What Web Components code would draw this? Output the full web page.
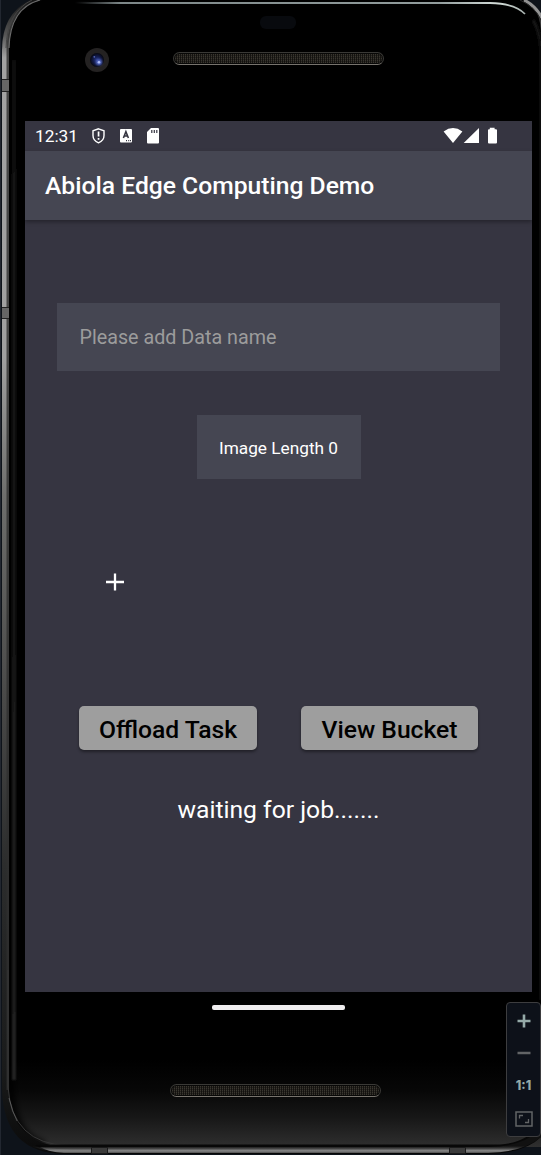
<!DOCTYPE html>
<html lang="en"><head><meta charset="utf-8"><title>Abiola Edge Computing Demo</title>
<style>
html,body{margin:0;background:#0d1118;overflow:hidden}
body{width:541px;height:1155px;font-family:Roboto,sans-serif;color:#fff}
</style></head><body>
<phone-device>
  <status-bar></status-bar>
  <app-bar>Abiola Edge Computing Demo</app-bar>
  <app-body></app-body>
</phone-device>
<zoom-controls></zoom-controls>
<script>
const define=(name,html)=>customElements.define(name,class extends HTMLElement{
  constructor(){super();const t=document.createElement('template');t.innerHTML=html;
    this.attachShadow({mode:'open'}).append(t.content.cloneNode(true));}
});

define('speaker-grille',`<style>
:host{display:block;box-sizing:border-box;width:211px;height:13px;border:1px solid #3a3936;border-bottom-color:#77736d;border-radius:7px;background:#080807;padding:1px}
div{height:100%;border-radius:5px;background:repeating-linear-gradient(0deg,transparent 0 1px,#0d0c0a66 1px 2px),repeating-linear-gradient(90deg,#3a3730 0 1px,#171512 1px 2px)}
</style><div></div>`);

define('device-frame',`<style>:host{display:block}svg{display:block}</style>
<svg width="541" height="1155" viewBox="0 0 541 1155">
<defs>
<linearGradient id="side" x1="0" y1="0" x2="0" y2="1155" gradientUnits="userSpaceOnUse">
<stop offset="0" stop-color="#161616"/><stop offset=".03" stop-color="#555"/><stop offset=".05" stop-color="#a2a2a2"/><stop offset=".31" stop-color="#a0a0a0"/><stop offset=".43" stop-color="#6e6e6c"/><stop offset=".6" stop-color="#4a4a49"/><stop offset=".75" stop-color="#2c2d2d"/><stop offset=".93" stop-color="#191a1a"/><stop offset="1" stop-color="#0a0a0a"/></linearGradient>
<linearGradient id="base" x1="0" y1="1060" x2="0" y2="1148" gradientUnits="userSpaceOnUse"><stop offset="0" stop-color="#000"/><stop offset=".35" stop-color="#070707"/><stop offset=".65" stop-color="#171717"/><stop offset="1" stop-color="#303030"/></linearGradient>
<linearGradient id="bottom" x1="0" y1="1146" x2="0" y2="1154" gradientUnits="userSpaceOnUse"><stop offset="0" stop-color="#111"/><stop offset=".25" stop-color="#333"/><stop offset=".6" stop-color="#8a8a8a"/><stop offset="1" stop-color="#333"/></linearGradient>
<linearGradient id="fade" x1="30" x2="100" y1="0" y2="0" gradientUnits="userSpaceOnUse"><stop offset="0" stop-color="#777" stop-opacity="0"/><stop offset="1" stop-color="#777"/></linearGradient>
<linearGradient id="shine" x1="75" x2="530" y1="0" y2="0" gradientUnits="userSpaceOnUse"><stop offset="0" stop-color="#778083" stop-opacity="0"/><stop offset=".1" stop-color="#7d8788"/><stop offset=".8" stop-color="#929d9d"/><stop offset=".93" stop-color="#d3dcd8"/><stop offset="1" stop-color="#a0aaa7"/></linearGradient>
<linearGradient id="rim" x1="0" y1="0" x2="0" y2="1155" gradientUnits="userSpaceOnUse"><stop offset="0" stop-color="#080808"/><stop offset=".2" stop-color="#151515"/><stop offset=".8" stop-color="#1c1c1c"/><stop offset="1" stop-color="#262626"/></linearGradient>
<radialGradient id="lens"><stop stop-color="#263784"/><stop offset=".55" stop-color="#121a48"/><stop offset="1" stop-color="#070810"/></radialGradient>
<clipPath id="glass"><path d="M9 48Q9 6 42 0H527Q541 12 541 34V1147H70Q9 1147 9 1085Z"/></clipPath>
<filter id="soft" filterUnits="userSpaceOnUse" x="0" y="0" width="541" height="1155"><feGaussianBlur stdDeviation=".8"/></filter><filter id="softer" x="-50%" y="-50%" width="200%" height="200%"><feGaussianBlur stdDeviation="3"/></filter>
</defs>
<path fill="#0e131a" d="M0 0h541v1155H0z"/><path fill="#222730" d="M0 0h1v1155H0z"/>
<path fill="url(#side)" d="M30 0Q2 14 2 50V1090Q4 1153 64 1154H488Q524 1153 541 1137V18Q536 7 525 0Z"/>
<path fill="#303030" opacity=".8" d="M6.5 50q0-28 17-42L14 24Q9 32 9 50V1090H6.5Z"/>
<g clip-path="url(#glass)"><path fill="#000" d="M0 0h541v1155H0z"/><path fill="url(#base)" d="M0 1060h541v95H0z"/>
<path fill="none" stroke="#000" stroke-width="7" filter="url(#softer)" d="M10 1040V1085Q11 1136 44 1145"/>
<path fill="none" stroke="url(#rim)" stroke-width="4" filter="url(#soft)" d="M14 60V1080"/></g>
<path fill="none" stroke="#6b6b6b" stroke-width="1.2" d="M9 48Q10 8 40 0"/><path fill="none" stroke="#444" d="M6 48Q7 12 32 0"/>
<path fill="none" stroke="#363636" d="M8 970V1087Q12 1144 68 1145.5"/>
<path fill="none" stroke="#777" opacity=".6" d="M9 1098Q12 1112 17 1121"/>
<path fill="#080808" d="M62 1144.5H500Q526 1143 541 1124V1137Q525 1153 488 1154H64Q50 1153 35 1145Z"/>
<path fill="url(#bottom)" d="M65 1147H490Q520 1147 541 1130V1137Q523 1152 488 1153H64Q48 1152 40 1147Z"/>
<path fill="url(#fade)" d="M30 1146Q60 1151 100 1150V1152H70Q48 1152 30 1146Z"/>
<path fill="#3b3b3b" stroke="#1a1a1a" d="M91.5 1147.5h16v6h-16zM449.5 1147.5h16v6h-16z"/>
<path fill="#666" d="M2 79h7v12H2zM2 307h7v12H2z"/><path stroke="#222" d="M2 79.5h7M2 91.5h7M2 307.5h7M2 318.5h7"/>
<path fill="none" stroke="url(#shine)" stroke-width="1.8" d="M75 2.6L91 3H490Q515 3.5 525 14"/>
<path fill="none" stroke="#929292" stroke-width="3" d="M524 0Q536 6 542 18"/><path fill="none" stroke="#292929" d="M520 0Q535 7 541 20"/>
<path fill="none" stroke="#171717" stroke-width="3" filter="url(#soft)" d="M533 20Q540 32 541 48V1000"/>
<rect x="260" y="16" width="36" height="13" rx="6" fill="#080a0e"/>
<circle cx="97" cy="60" r="12" fill="#242222"/><circle cx="97" cy="60" r="7" fill="url(#lens)"/><circle cx="99" cy="62.3" r="3" fill="#596dca" filter="url(#soft)"/><circle cx="99" cy="62.3" r="1.3" fill="#aebcf5"/><circle cx="94.3" cy="56.8" r=".9" fill="#5266bc"/>
</svg>`);

define('phone-device',`<style>
:host{display:grid;width:541px;height:1155px}
device-frame,main{grid-area:1/1}
main{display:grid;grid-template-rows:52px 13px 56px 871px 13px 6px 73px 13px;align-content:start;position:relative}
.top{grid-row:2;margin-left:173px}.screen{grid-row:4;width:507px;margin-left:25px;background:#363541;display:grid;grid-template-rows:30px 69px 772px}
.home{grid-row:6;width:133px;height:5px;margin-left:212px;border-radius:2px;background:#efedef}
.low{grid-row:8;margin-left:170px}
</style><device-frame></device-frame><main><speaker-grille class="top"></speaker-grille><div class="screen"><slot></slot></div><div class="home"></div><speaker-grille class="low"></speaker-grille></main>`);

define('status-bar',`<style>
:host{display:flex;align-items:center;box-sizing:border-box;padding:0 34px 0 10px;background:#363541;color:#fff}
span{font-size:17.3px;line-height:30px;width:57px}
svg{display:block}.n{width:70px;height:30px}.s{margin-left:auto}
</style><span>12:31</span>
<svg class="n" width="70" height="30" viewBox="92 121 70 30"><path fill="none" stroke="#fff" stroke-width="1.4" d="M98.5 128.8l5.5 2v4.8q0 5.2-5.5 7.2-5.5-2-5.5-7.2v-4.8z"/><path fill="#fff" d="M97.7 131.6h1.7v5h-1.7zM97.7 138h1.7v1.8h-1.7zM121 129h10q1 0 1 1v11.5q0 1-1 1h-10q-1 0-1-1V130q0-1 1-1zM151 128h7q1 0 1 1v13.5q0 1-1 1h-10q-1 0-1-1V132z"/><path stroke="#363541" stroke-width="1.6" fill="none" d="M123.4 138l2.5-6.3 2.5 6.3M124 136h4"/><path stroke="#363541" stroke-width="1.2" fill="none" d="M126 140.6h1M128.2 140.6h1M130 140.6h1M151.8 130v3M154.3 130v3M156.8 130v3"/></svg>
<svg class="s" width="56" height="30" viewBox="442 121 56 30"><path fill="#fff" d="M443.6 131.4Q453 124.6 462.4 131.4L453 143zM479 128v15h-15.3zM489.8 129.2v-1.4h4.8v1.4h1.4q1 0 1 1v12.3q0 1-1 1h-7q-1 0-1-1v-12.3q0-1 1-1z"/></svg>`);

define('app-bar',`<style>
:host{display:flex;align-items:center;padding-left:20px;background:#454652;color:#fff;box-shadow:0 2px 4px #0005;font-size:24.67px;font-weight:500;position:relative;white-space:nowrap}
</style><span><slot></slot></span>`);

define('data-field',`<style>
:host{display:flex;align-items:center;box-sizing:border-box;height:68px;padding-left:22.5px;background:#454652;color:#9c9c9c;font-size:19.73px;white-space:nowrap}
</style><span><slot></slot></span>`);

define('image-count',`<style>
:host{display:flex;align-items:center;justify-content:center;box-sizing:border-box;width:164px;height:64px;padding-top:1px;background:#454652;color:#fff;font-size:17.26px;white-space:nowrap}
</style><span><slot></slot></span>`);

define('task-button',`<style>
:host{display:block}button{display:block;width:100%;height:44px;padding:0;border:0;border-radius:5px;background:#9e9e9e;color:#000;font:500 24.67px/47px Roboto,sans-serif;box-shadow:0 2px 3px #0006;white-space:nowrap}
</style><button><slot></slot></button>`);

define('app-body',`<style>
:host{display:flex;flex-direction:column;align-items:center;box-sizing:border-box;padding-top:83px}
data-field{width:443px}image-count{margin:44px 0 0}
.add{display:block;width:18px;height:18px;margin:93.5px 0 0 81px;align-self:flex-start}
.actions{display:grid;grid-template-columns:178px 177px;gap:44px;margin:115.5px 0 0}
p{margin:45px 0 0;font-size:24.67px;line-height:30px;white-space:nowrap}
</style><data-field>Please add Data name</data-field><image-count>Image Length 0</image-count>
<svg class="add" viewBox="0 0 18 18"><path stroke="#fff" stroke-width="2.3" d="M0 9h18M9 .5v17"/></svg>
<div class="actions"><task-button>Offload Task</task-button><task-button>View Bucket</task-button></div><p>waiting for job.......</p>`);

define('zoom-controls',`<style>
:host{position:absolute;left:506px;top:1002px;box-sizing:border-box;width:35px;height:135px;border:1px solid #3d3d3f;border-radius:4px;background:#0d1119;display:grid;grid-template-rows:36px 27px 40px 26px;justify-items:center;align-items:center}
svg{display:block}span{font:800 12.5px/14px Inter,sans-serif;color:#95aaa8}
</style><svg width="14" height="14"><path stroke="#95aaa8" stroke-width="2.6" d="M.5 7h13M7 .5v13"/></svg>
<svg width="14" height="4"><path stroke="#626466" stroke-width="2.5" d="M.5 2h13"/></svg><span>1:1</span>
<svg width="18" height="16" fill="none" stroke="#626466"><path stroke-width="1.5" d="M1 1h16v14H1z"/><path stroke-width="1.3" d="M4.5 7.5v-3h3.5M13.5 8v3.5H10"/></svg>`);
</script></body></html>
